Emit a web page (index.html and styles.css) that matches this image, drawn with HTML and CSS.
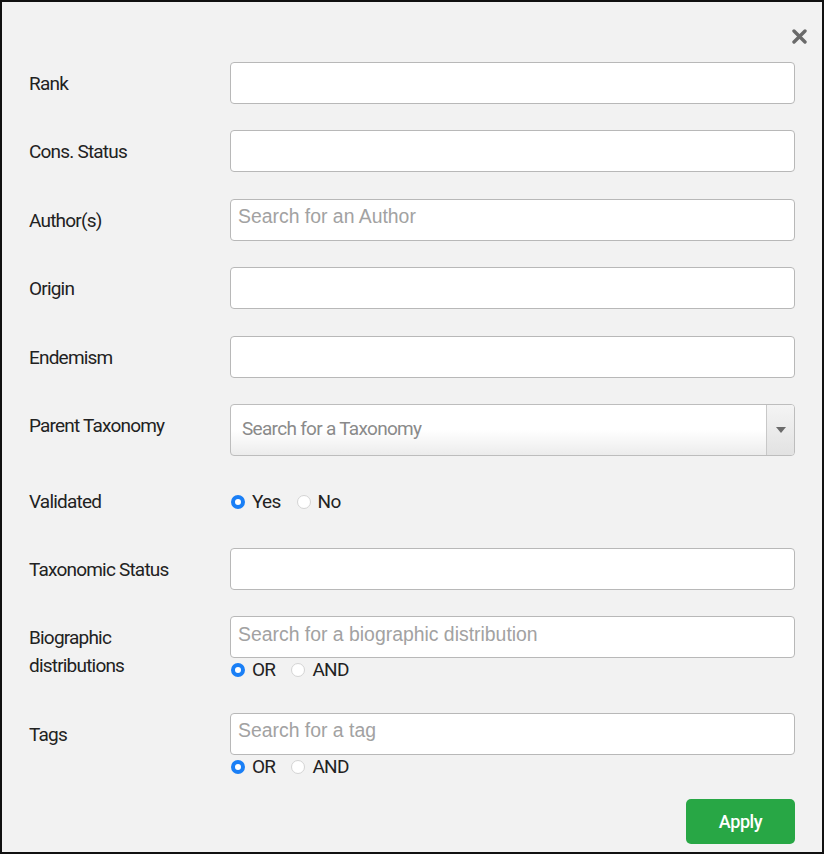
FILE: index.html
```html
<!DOCTYPE html>
<html>
<head>
<meta charset="utf-8">
<link rel="stylesheet" href="styles.css">
</head>
<body>
<div class="frame">
  <div class="header">
    <svg class="close" width="15" height="15" viewBox="0 0 15 15"><path d="M2 2 L13 13 M13 2 L2 13" stroke="#6a6a6a" stroke-width="3.4" stroke-linecap="round"/></svg>
  </div>
  <div class="form">
    <div class="row">
      <div class="label">Rank</div>
      <div class="control"><div class="input"></div></div>
    </div>
    <div class="row">
      <div class="label">Cons. Status</div>
      <div class="control"><div class="input"></div></div>
    </div>
    <div class="row">
      <div class="label">Author(s)</div>
      <div class="control"><div class="input"><span class="ph">Search for an Author</span></div></div>
    </div>
    <div class="row">
      <div class="label">Origin</div>
      <div class="control"><div class="input"></div></div>
    </div>
    <div class="row">
      <div class="label">Endemism</div>
      <div class="control"><div class="input"></div></div>
    </div>
    <div class="row">
      <div class="label">Parent Taxonomy</div>
      <div class="control">
        <div class="select">
          <span class="select-ph">Search for a Taxonomy</span>
          <span class="arrow"><svg width="10" height="6" viewBox="0 0 10 6"><path d="M0 0 H10 L5 6 Z" fill="#6b6b6b"/></svg></span>
        </div>
      </div>
    </div>
    <div class="row row-center">
      <div class="label label-center">Validated</div>
      <div class="control">
        <div class="radios radios-tall">
          <span class="radio checked"></span><span class="rlabel">Yes</span>
          <span class="radio"></span><span class="rlabel">No</span>
        </div>
      </div>
    </div>
    <div class="row">
      <div class="label">Taxonomic Status</div>
      <div class="control"><div class="input"></div></div>
    </div>
    <div class="row">
      <div class="label">Biographic<br>distributions</div>
      <div class="control">
        <div class="input"><span class="ph">Search for a biographic distribution</span></div>
        <div class="radios">
          <span class="radio checked"></span><span class="rlabel">OR</span>
          <span class="radio"></span><span class="rlabel">AND</span>
        </div>
      </div>
    </div>
    <div class="row">
      <div class="label">Tags</div>
      <div class="control">
        <div class="input"><span class="ph">Search for a tag</span></div>
        <div class="radios">
          <span class="radio checked"></span><span class="rlabel">OR</span>
          <span class="radio"></span><span class="rlabel">AND</span>
        </div>
      </div>
    </div>
  </div>
  <div class="footer">
    <button class="apply">Apply</button>
  </div>
</div>
</body>
</html>
```
FILE: styles.css
```css
html, body {
  margin: 0;
  padding: 0;
  background: #ffffff;
}
.frame {
  width: 824px;
  height: 854px;
  box-sizing: border-box;
  border: 2px solid #111111;
  background: #f2f2f2;
  font-family: Roboto, "Liberation Sans", sans-serif;
  color: #222222;
  display: flex;
  flex-direction: column;
}
.header {
  height: 60px;
  box-sizing: border-box;
  padding: 27px 15px 0 0;
  display: flex;
  justify-content: flex-end;
  align-items: flex-start;
}
.close {
  display: block;
}
.form {
  display: flex;
  flex-direction: column;
  gap: 26.4px;
  padding: 0 27px;
}
.row {
  display: flex;
  align-items: flex-start;
}
.row-center {
  align-items: center;
}
.label {
  width: 201px;
  flex: none;
  font-size: 19px;
  line-height: 28px;
  padding-top: 8px;
  letter-spacing: -0.8px;
}
.label-center {
  padding-top: 0;
}
.control {
  flex: 1;
  display: flex;
  flex-direction: column;
}
.input {
  height: 42px;
  box-sizing: border-box;
  background: #ffffff;
  border: 1px solid #b8b8b8;
  border-radius: 4px;
  display: flex;
  align-items: center;
  padding: 0 7px;
}
.ph {
  font-family: "Liberation Sans", Arial, sans-serif;
  font-size: 19.4px;
  color: #a2a2a2;
  position: relative;
  top: -3px;
}
.select {
  height: 52px;
  box-sizing: border-box;
  border: 1px solid #bdbdbd;
  border-radius: 4px;
  background: linear-gradient(#ffffff 0%, #ffffff 50%, #ececec 100%);
  display: flex;
  align-items: stretch;
}
.select-ph {
  flex: 1;
  display: flex;
  align-items: center;
  padding-left: 11px;
  font-size: 19px;
  color: #8a8a8a;
  letter-spacing: -0.7px;
  padding-bottom: 2px;
}
.arrow {
  width: 27px;
  border-left: 1px solid #c8c8c8;
  display: flex;
  align-items: center;
  justify-content: center;
  background: linear-gradient(#f4f4f4, #e2e2e2);
  border-radius: 0 3px 3px 0;
}
.radios {
  display: flex;
  align-items: center;
  height: 24px;
  margin-bottom: 4px;
  font-size: 19px;
  letter-spacing: -0.7px;
}
.radios-tall {
  height: 39px;
  margin-bottom: 0;
}
.radio {
  width: 14px;
  height: 14px;
  box-sizing: border-box;
  border-radius: 50%;
  background: #ffffff;
  border: 1px solid #d4d4d4;
  margin-left: 1px;
  flex: none;
}
.radio.checked {
  border: 4px solid #1a7ff6;
  background: #ffffff;
}
.rlabel {
  margin-left: 7px;
  margin-right: 15px;
  line-height: 24px;
}
.footer {
  margin-top: auto;
  display: flex;
  justify-content: flex-end;
  padding: 0 27px 8px 0;
}
.apply {
  width: 109px;
  height: 45px;
  border: none;
  border-radius: 5px;
  background: #28a745;
  color: #ffffff;
  font-family: Roboto, "Liberation Sans", sans-serif;
  font-size: 18px;
  font-weight: 500;
  letter-spacing: -0.4px;
}
```
